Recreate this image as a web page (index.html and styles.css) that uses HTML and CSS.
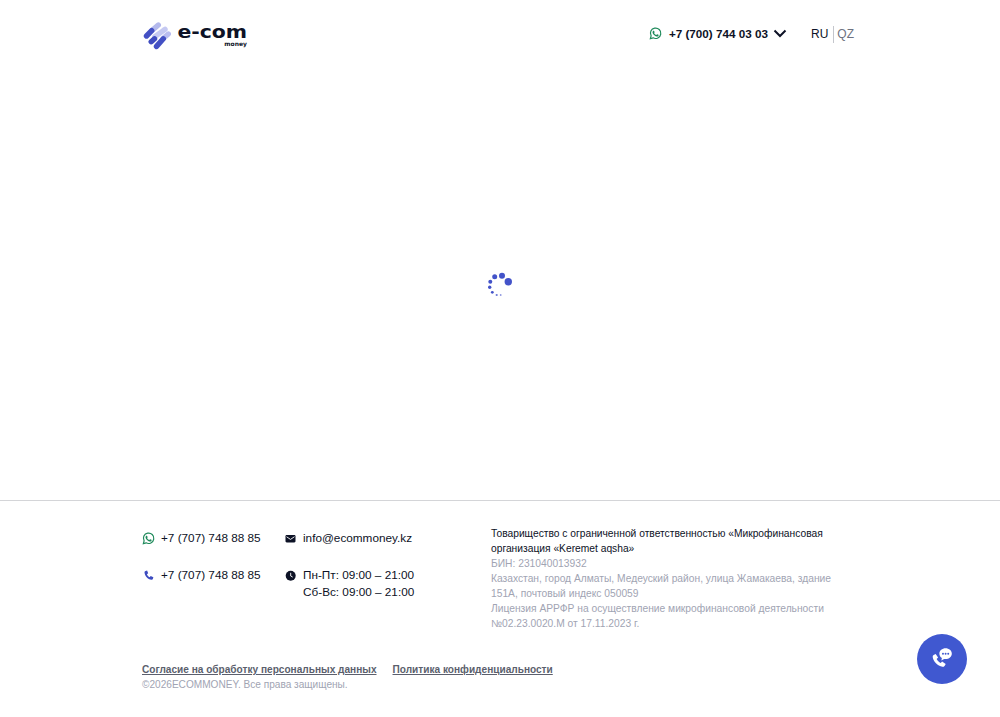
FILE: index.html
```html
<!DOCTYPE html>
<html lang="ru">
<head>
  <meta charset="UTF-8">
  <title>e-com money</title>
  <link rel="stylesheet" href="styles.css">
</head>
<body>

  <header class="site-header">
    <a class="logo" href="#">
      <svg class="logo-mark" width="28" height="29" viewBox="0 0 28 29">
        <g stroke-linecap="round" fill="none" stroke-width="5.400">
          <path d="M8.700 9.700L15.300 4" stroke="#b4b9ec"/>
          <path d="M12 15.700L22 8.300" stroke="#c5c9f2"/>
          <path d="M20.300 17.300L25.300 13" stroke="#b9bdf0"/>
          <path d="M3.500 15L8.700 9.700" stroke="#4350c4"/>
          <path d="M8.200 20.700L11.500 17.800" stroke="#3f4cc0"/>
          <path d="M13.500 25.400L20.300 17.800" stroke="#4350c4"/>
        </g>
      </svg>
      <span class="logo-text">
        <span class="logo-name">e-com</span>
        <span class="logo-sub">money</span>
      </span>
    </a>
    <div class="header-right">
      <a class="header-phone" href="#">
        <svg class="wa-icon" width="13" height="13" viewBox="0 0 24 24"><path fill="none" stroke="#1f8a5b" stroke-width="2.200" d="M2.500 21.500l1.400-5.100A9.600 9.600 0 1 1 7.600 20z"/><path fill="#1f8a5b" d="M8.600 6.800c.3 0 .6 0 .8.500l.9 2.100c.1.300 0 .5-.1.700l-.7.900c-.1.200-.2.400 0 .6.900 1.500 2 2.500 3.600 3.200.2.100.4.100.6-.1l.9-1.100c.2-.2.400-.3.700-.2l2 1c.3.100.5.300.5.500 0 .6-.2 1.500-.8 2-.8.700-1.900 1-3.300.6-3.300-1-5.800-3.300-7-6.300-.5-1.400-.2-2.700.7-3.700.3-.4.800-.7 1.200-.7z"/></svg>
        <span class="header-number">+7 (700) 744 03 03</span>
        <svg class="chevron" width="14" height="9" viewBox="0 0 14 9"><path d="M1.500 1.500L7 7l5.500-5.500" fill="none" stroke="#0d1226" stroke-width="2"/></svg>
      </a>
      <div class="lang-switch">
        <a class="lang active" href="#">RU</a>
        <a class="lang" href="#">QZ</a>
      </div>
    </div>
  </header>

  <main class="content">
    <svg class="spinner" width="26" height="26" viewBox="0 0 26 26">
      <circle cx="21.300" cy="9.700" r="3.700" fill="#4353c9"/>
      <circle cx="15" cy="3.700" r="3" fill="#4353c9"/>
      <circle cx="7.700" cy="4.700" r="2.500" fill="#4353c9"/>
      <circle cx="3.300" cy="9.700" r="2" fill="#4353c9"/>
      <circle cx="2.700" cy="15.300" r="1.700" fill="#4353c9"/>
      <circle cx="5.300" cy="20.300" r="1.400" fill="#4353c9"/>
      <circle cx="9.700" cy="23" r="1.100" fill="#6a76d6"/>
      <circle cx="13.700" cy="23" r="0.900" fill="#8f98e0"/>
    </svg>
  </main>

  <footer class="site-footer">
    <div class="footer-inner">
      <div class="footer-top">
        <ul class="contact-col phones">
          <li>
            <svg class="wa-icon" width="13" height="13" viewBox="0 0 24 24"><path fill="none" stroke="#1f8a5b" stroke-width="2.200" d="M2.500 21.500l1.400-5.100A9.600 9.600 0 1 1 7.600 20z"/><path fill="#1f8a5b" d="M8.600 6.800c.3 0 .6 0 .8.500l.9 2.100c.1.300 0 .5-.1.700l-.7.900c-.1.200-.2.400 0 .6.900 1.500 2 2.500 3.600 3.200.2.100.4.100.6-.1l.9-1.100c.2-.2.400-.3.700-.2l2 1c.3.100.5.300.5.500 0 .6-.2 1.500-.8 2-.8.700-1.900 1-3.300.6-3.300-1-5.800-3.300-7-6.300-.5-1.400-.2-2.700.7-3.700.3-.4.800-.7 1.200-.7z"/></svg>
            <a href="#">+7 (707) 748 88 85</a>
          </li>
          <li>
            <svg width="13" height="13" viewBox="0 0 24 24"><path fill="#3d4cc0" d="M6.600 3.500l2.800-.7 2 5-2.300 1.800c.9 2.400 2.700 4.300 5 5.400l2-2.100 4.900 2.300-.8 3c-.3 1.100-1.400 1.900-2.600 1.700C10.300 18.800 5.300 13.700 4.600 6.100c-.1-1.200.8-2.300 2-2.600z"/></svg>
            <a href="#">+7 (707) 748 88 85</a>
          </li>
        </ul>
        <ul class="contact-col">
          <li>
            <svg width="11" height="13" viewBox="0 0 11 13"><path fill="#0d1226" d="M1.700 3h7.600c.6 0 1.200.5 1.200 1.200v5c0 .7-.6 1.200-1.200 1.200H1.700C1.100 10.400.5 9.900.5 9.200v-5C.5 3.500 1.100 3 1.700 3z"/><path d="M1.500 4.700l4 2.700 4-2.700" fill="none" stroke="#fff" stroke-width=".9"/></svg>
            <a href="#">info@ecommoney.kz</a>
          </li>
          <li>
            <svg width="11" height="13" viewBox="0 0 11 13"><circle cx="5.700" cy="6.800" r="5" fill="#0d1226"/><path d="M5.700 3.800v3.200l2 1.100" fill="none" stroke="#fff" stroke-width=".9"/></svg>
            <span>Пн-Пт: 09:00 – 21:00<br>Сб-Вс: 09:00 – 21:00</span>
          </li>
        </ul>
        <div class="legal">
          <p class="legal-name">Товарищество с ограниченной ответственностью «Микрофинансовая организация «Keremet aqsha»</p>
          <p>БИН: 231040013932</p>
          <p>Казахстан, город Алматы, Медеуский район, улица Жамакаева, здание 151А, почтовый индекс 050059</p>
          <p>Лицензия АРРФР на осуществление микрофинансовой деятельности №02.23.0020.М от 17.11.2023 г.</p>
        </div>
      </div>
      <div class="footer-bottom">
        <div class="policy-links">
          <a href="#">Согласие на обработку персональных данных</a>
          <a href="#">Политика конфиденциальности</a>
        </div>
        <p class="copyright">©2026ECOMMONEY. Все права защищены.</p>
      </div>
    </div>
  </footer>

  <a class="chat-btn" href="#">
    <svg width="24" height="24" viewBox="0 0 22 22">
      <path fill="#fff" d="M3.300 7.400l1.900-1 2.200 3.300-1.300 1.300c.8 1.600 2 2.800 3.700 3.600l1.300-1.300 3.300 2.200-.9 1.800c-.4.700-1.200 1.100-2 .9C6.700 16.900 3.300 13.500 2.500 9.300c-.1-.8.200-1.500.8-1.900z"/>
      <path fill="#fff" d="M14.300 1.200c3.100 0 5.700 2.100 5.700 4.900s-2.600 4.900-5.700 4.900c-.4 0-.9 0-1.300-.1L10.400 12.400l.5-2.400C9.500 9.100 8.600 7.700 8.600 6.100c0-2.800 2.600-4.900 5.700-4.900z"/>
      <circle cx="11.900" cy="6.100" r=".9" fill="#4058d0"/><circle cx="14.300" cy="6.100" r=".9" fill="#4058d0"/><circle cx="16.700" cy="6.100" r=".9" fill="#4058d0"/>
    </svg>
  </a>

</body>
</html>
```

FILE: styles.css
```css
* { box-sizing: border-box; }
body {
  margin: 0;
  min-height: 100vh;
  display: flex;
  flex-direction: column;
  background: #fff;
  color: #0d1226;
  font-family: "Liberation Sans", Arial, sans-serif;
}
a { color: inherit; text-decoration: none; }
p { margin: 0; }
ul { list-style: none; margin: 0; padding: 0; }

.site-header {
  display: flex;
  align-items: flex-start;
  justify-content: space-between;
  padding: 21px 146px 0 143px;
  height: 68px;
}
.logo {
  display: flex;
  align-items: center;
  gap: 6px;
}
.logo-text {
  display: flex;
  flex-direction: column;
  align-items: flex-end;
  width: 70px;
}
.logo-name {
  font-family: "DejaVu Sans", sans-serif;
  font-weight: 700;
  font-size: 17px;
  line-height: 17px;
  transform: scaleX(1.2);
  transform-origin: right center;
}
.logo-sub {
  font-family: "DejaVu Sans", sans-serif;
  font-size: 6px;
  line-height: 6px;
  font-weight: 700;
}
.header-right {
  display: flex;
  align-items: center;
  gap: 24px;
  height: 25px;
}
.header-phone {
  display: flex;
  align-items: center;
  gap: 6px;
  font-size: 11.7px;
  font-weight: 700;
}
.header-number { margin-left: 1px; margin-right: -1px; }
.lang-switch {
  display: flex;
  align-items: center;
  padding-top: 2px;
  font-size: 12px;
}
.lang {
  color: #6e7280;
  padding: 0 0 0 3px;
  line-height: 17px;
}
.lang.active {
  color: #0d1226;
  padding: 0 5px 0 0;
  border-right: 1px solid #c4c6cc;
}

.content {
  flex: 1;
  display: flex;
  align-items: center;
  justify-content: center;
  padding-top: 2px;
}

.site-footer {
  border-top: 1px solid #d4d5d8;
  height: 217px;
}
.footer-inner {
  padding: 25px 146px 0 142px;
}
.footer-top {
  display: flex;
}
.contact-col {
  display: flex;
  flex-direction: column;
  gap: 20px;
  width: 143px;
  margin-top: 3px;
  font-size: 11.75px;
  line-height: 17px;
}
.contact-col + .contact-col { width: 206px; }
.contact-col li {
  display: flex;
  align-items: flex-start;
  gap: 7px;
}
.contact-col.phones li { gap: 6px; }
.contact-col li svg { margin-top: 3px; flex-shrink: 0; }
.legal {
  width: 345px;
  font-size: 10.25px;
  line-height: 15px;
  color: #a1a4b3;
}
.legal-name { color: #0d1226; }
.footer-bottom {
  margin-top: 31px;
  font-size: 10.1px;
  line-height: 15px;
}
.policy-links {
  display: flex;
  gap: 16px;
  font-weight: 700;
  color: #5b5f6d;
}
.policy-links a { text-decoration: underline; }
.copyright { color: #a1a4b3; }

.chat-btn {
  position: fixed;
  right: 33px;
  bottom: 33px;
  width: 50px;
  height: 50px;
  border-radius: 50%;
  background: #4058d0;
  display: flex;
  align-items: center;
  justify-content: center;
}
```
